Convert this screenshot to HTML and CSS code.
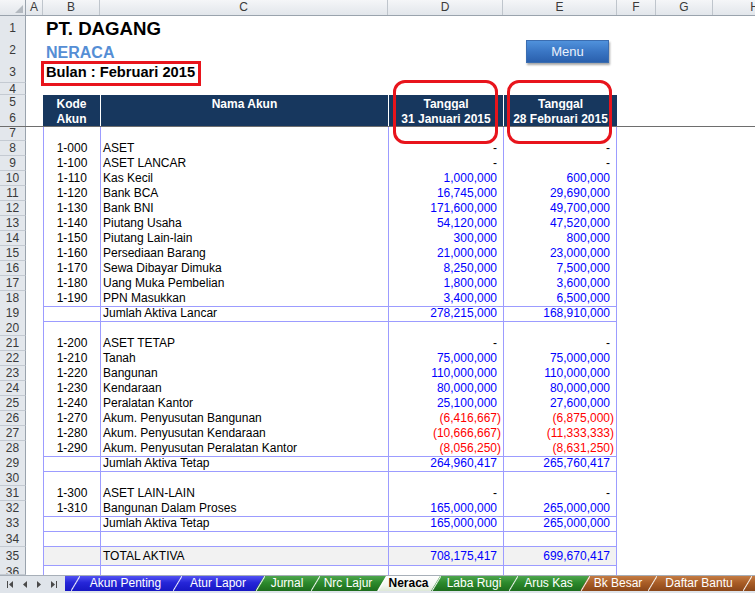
FILE: index.html
```html
<!DOCTYPE html>
<html lang="id">
<head>
    <meta charset="UTF-8">
    <title>Neraca - PT. Dagang</title>
    <link rel="stylesheet" href="styles.css">
</head>
<body>
<div class="sheet">
    <div class="colhead">
        <div class="corner"><svg width="26" height="16" viewBox="0 0 26 16"><polygon points="15,13 23,13 23,5" fill="#b3b9c0"/></svg></div>
        <div>A</div><div>B</div><div>C</div><div>D</div><div>E</div><div>F</div><div>G</div><div>H</div>
    </div>

    <div class="row r1"><div class="rh">1</div><div class="title t1">PT. DAGANG</div></div>
    <div class="row r2"><div class="rh">2</div><div class="title t2">NERACA</div></div>
    <div class="row r3"><div class="rh">3</div><div class="title t3">Bulan : Februari 2015</div></div>
    <div class="row r4"><div class="rh">4</div></div>
    <div class="row"><div class="rh">5</div><div class="h first">Kode</div><div class="h">Nama Akun</div><div class="h">Tanggal</div><div class="h">Tanggal</div></div>
    <div class="row r16"><div class="rh">6</div><div class="h first">Akun</div><div class="h"></div><div class="h">31 Januari 2015</div><div class="h">28 Februari 2015</div></div>

    <div class="row"><div class="rh">7</div><div class="b"></div><div class="c"></div><div class="d"></div><div class="e"></div></div>
    <div class="row"><div class="rh">8</div><div class="b">1-000</div><div class="c">ASET</div><div class="d nil">-</div><div class="e nil">-</div></div>
    <div class="row"><div class="rh">9</div><div class="b">1-100</div><div class="c">ASET LANCAR</div><div class="d nil">-</div><div class="e nil">-</div></div>
    <div class="row"><div class="rh">10</div><div class="b">1-110</div><div class="c">Kas Kecil</div><div class="d">1,000,000</div><div class="e">600,000</div></div>
    <div class="row"><div class="rh">11</div><div class="b">1-120</div><div class="c">Bank BCA</div><div class="d">16,745,000</div><div class="e">29,690,000</div></div>
    <div class="row"><div class="rh">12</div><div class="b">1-130</div><div class="c">Bank BNI</div><div class="d">171,600,000</div><div class="e">49,700,000</div></div>
    <div class="row"><div class="rh">13</div><div class="b">1-140</div><div class="c">Piutang Usaha</div><div class="d">54,120,000</div><div class="e">47,520,000</div></div>
    <div class="row"><div class="rh">14</div><div class="b">1-150</div><div class="c">Piutang Lain-lain</div><div class="d">300,000</div><div class="e">800,000</div></div>
    <div class="row"><div class="rh">15</div><div class="b">1-160</div><div class="c">Persediaan Barang</div><div class="d">21,000,000</div><div class="e">23,000,000</div></div>
    <div class="row"><div class="rh">16</div><div class="b">1-170</div><div class="c">Sewa Dibayar Dimuka</div><div class="d">8,250,000</div><div class="e">7,500,000</div></div>
    <div class="row"><div class="rh">17</div><div class="b">1-180</div><div class="c">Uang Muka Pembelian</div><div class="d">1,800,000</div><div class="e">3,600,000</div></div>
    <div class="row sep"><div class="rh">18</div><div class="b">1-190</div><div class="c">PPN Masukkan</div><div class="d">3,400,000</div><div class="e">6,500,000</div></div>
    <div class="row sep"><div class="rh">19</div><div class="b"></div><div class="c">Jumlah Aktiva Lancar</div><div class="d">278,215,000</div><div class="e">168,910,000</div></div>
    <div class="row"><div class="rh">20</div><div class="b"></div><div class="c"></div><div class="d"></div><div class="e"></div></div>
    <div class="row"><div class="rh">21</div><div class="b">1-200</div><div class="c">ASET TETAP</div><div class="d nil">-</div><div class="e nil">-</div></div>
    <div class="row"><div class="rh">22</div><div class="b">1-210</div><div class="c">Tanah</div><div class="d">75,000,000</div><div class="e">75,000,000</div></div>
    <div class="row"><div class="rh">23</div><div class="b">1-220</div><div class="c">Bangunan</div><div class="d">110,000,000</div><div class="e">110,000,000</div></div>
    <div class="row"><div class="rh">24</div><div class="b">1-230</div><div class="c">Kendaraan</div><div class="d">80,000,000</div><div class="e">80,000,000</div></div>
    <div class="row"><div class="rh">25</div><div class="b">1-240</div><div class="c">Peralatan Kantor</div><div class="d">25,100,000</div><div class="e">27,600,000</div></div>
    <div class="row"><div class="rh">26</div><div class="b">1-270</div><div class="c">Akum. Penyusutan Bangunan</div><div class="d neg">(6,416,667)</div><div class="e neg">(6,875,000)</div></div>
    <div class="row"><div class="rh">27</div><div class="b">1-280</div><div class="c">Akum. Penyusutan Kendaraan</div><div class="d neg">(10,666,667)</div><div class="e neg">(11,333,333)</div></div>
    <div class="row sep"><div class="rh">28</div><div class="b">1-290</div><div class="c">Akum. Penyusutan Peralatan Kantor</div><div class="d neg">(8,056,250)</div><div class="e neg">(8,631,250)</div></div>
    <div class="row sep"><div class="rh">29</div><div class="b"></div><div class="c">Jumlah Aktiva Tetap</div><div class="d">264,960,417</div><div class="e">265,760,417</div></div>
    <div class="row"><div class="rh">30</div><div class="b"></div><div class="c"></div><div class="d"></div><div class="e"></div></div>
    <div class="row"><div class="rh">31</div><div class="b">1-300</div><div class="c">ASET LAIN-LAIN</div><div class="d nil">-</div><div class="e nil">-</div></div>
    <div class="row sep"><div class="rh">32</div><div class="b">1-310</div><div class="c">Bangunan Dalam Proses</div><div class="d">165,000,000</div><div class="e">265,000,000</div></div>
    <div class="row sep"><div class="rh">33</div><div class="b"></div><div class="c">Jumlah Aktiva Tetap</div><div class="d">165,000,000</div><div class="e">265,000,000</div></div>
    <div class="row sep r16"><div class="rh">34</div><div class="b"></div><div class="c"></div><div class="d"></div><div class="e"></div></div>
    <div class="row sep total r18"><div class="rh">35</div><div class="b"></div><div class="c">TOTAL AKTIVA</div><div class="d">708,175,417</div><div class="e">699,670,417</div></div>
    <div class="row r36"><div class="rh">36</div><div class="b"></div><div class="c"></div><div class="d"></div><div class="e"></div></div>

    <div class="tabbar">
        <div class="nav">
            <svg width="65" height="17" viewBox="0 0 65 17">
                <rect x="7" y="5" width="1" height="7" fill="#4a4a4a"/>
                <polygon points="9,8.5 13,5 13,12" fill="#4a4a4a"/>
                <polygon points="23,8.5 27,5 27,12" fill="#4a4a4a"/>
                <polygon points="37,5 37,12 41,8.5" fill="#4a4a4a"/>
                <polygon points="51,5 51,12 55,8.5" fill="#4a4a4a"/>
                <rect x="56" y="5" width="1" height="7" fill="#4a4a4a"/>
            </svg>
        </div>
        <div class="tab blue first w116">Akun Penting</div>
        <div class="tab blue w92">Atur Lapor</div>
        <div class="tab green w64">Jurnal</div>
        <div class="tab green w76">Nrc Lajur</div>
        <div class="tab active w63">Neraca</div>
        <div class="tab green w86">Laba Rugi</div>
        <div class="tab green w81">Arus Kas</div>
        <div class="tab brown w76">Bk Besar</div>
        <div class="tab brown w104">Daftar Bantu</div>
        <div class="tab brown w40"></div>
    </div>

    <!-- shapes drawn over the sheet -->
    <div class="freeze"></div>
    <div class="menu">Menu</div>
    <div class="mark-month"></div>
    <div class="mark-date d1"></div>
    <div class="mark-date d2"></div>
</div>
</body>
</html>
```

FILE: styles.css
```css
* {
    box-sizing: border-box;
}
body {
    margin: 0;
    background: #fff;
    font-family: "Liberation Sans", Arial, sans-serif;
    font-size: 12px;
    color: #000;
}
.sheet {
    position: relative;
    width: 755px;
    height: 593px;
    overflow: hidden;
}

/* column / row headers */
.colhead, .row {
    display: grid;
    grid-template-columns: 26px 17px 57px 288px 115px 114px 39px 57px 84px;
}
.colhead {
    height: 16px;
    background: linear-gradient(#f5f6f8, #e2e6eb);
    border-bottom: 1px solid #9aa3ad;
}
.colhead div {
    border-right: 1px solid #bfc5cc;
    text-align: center;
    line-height: 15px;
    color: #3a3a3a;
}
.colhead .corner {
    position: relative;
    border-right-color: #9aa3ad;
}
.corner svg {
    position: absolute;
    left: 0;
    top: 0;
}
.row {
    height: 15px;
    line-height: 15px;
}
.row.r1 { height: 24px; line-height: 24px; }
.row.r2 { height: 21px; line-height: 21px; }
.row.r3 { height: 22px; line-height: 22px; }
.row.r4 { height: 12px; line-height: 12px; }
.row.r16 { height: 16px; line-height: 16px; }
.row.r18 { height: 18px; line-height: 18px; }
.row.r36 { height: 10px; line-height: 15px; }
.rh {
    grid-column: 1;
    background: #e3e7ec;
    border-right: 1px solid #9aa3ad;
    border-bottom: 1px solid #c4cad2;
    text-align: center;
    color: #3a3a3a;
    overflow: hidden;
}

/* titles */
.title {
    grid-column: 3 / -1;
    padding-left: 3px;
    font-weight: bold;
    white-space: nowrap;
}
.t1 {
    font-size: 18.67px;
    padding-top: 1px;
}
.t2 {
    font-size: 16px;
    color: #558ed5;
    padding-top: 2px;
}
.t3 {
    font-size: 14.67px;
}

/* table header */
.h {
    background: #17375e;
    color: #fff;
    font-weight: bold;
    text-align: center;
    line-height: 15px;
    padding-top: 2px;
    border-left: 1px solid #fff;
    white-space: nowrap;
}
.h.first {
    grid-column: 3;
    border-left: 0;
}

/* table body */
.b, .c, .d, .e {
    border-left: 1px solid #9c9cff;
    white-space: nowrap;
}
.b {
    grid-column: 3;
    text-align: center;
}
.c {
    padding-left: 2px;
}
.d, .e {
    text-align: right;
    padding-right: 6px;
    color: #0000ff;
}
.e {
    border-right: 1px solid #9c9cff;
}
.d.nil, .e.nil {
    color: #000;
}
.d.neg, .e.neg {
    color: #ff0000;
    padding-right: 2px;
}
.sep .b, .sep .c, .sep .d, .sep .e {
    border-bottom: 1px solid #9c9cff;
}
.total .b, .total .c, .total .d, .total .e {
    background: #f2f2f2;
}

/* sheet tabs */
.tabbar {
    display: flex;
    height: 18px;
    background: #dfe4ea;
    border-top: 1px solid #a7afb8;
}
.nav {
    flex: none;
    width: 65px;
}
.nav svg {
    display: block;
}
.tab {
    flex: none;
    height: 15px;
    margin-left: -9px;
    padding: 0 9px;
    line-height: 15px;
    color: #fff;
    text-align: center;
    white-space: nowrap;
    overflow: hidden;
    clip-path: polygon(0 100%, 9px 0, 100% 0, 100% 100%);
    background:
        linear-gradient(to bottom right, transparent 43%, rgba(255, 255, 255, 0.9) 50%, transparent 57%) 1px 0 / 9px 15px no-repeat,
        var(--fill);
}
.tab.first {
    margin-left: 0;
    padding-left: 14px;
    clip-path: none;
    background-position: 6px 0, 0 0;
}
.blue { --fill: linear-gradient(#5252f3, #2525d8 45%, #1717c3); }
.green { --fill: linear-gradient(#4ea64e, #2c8a2c 45%, #1d6d1d); }
.brown { --fill: linear-gradient(#c47c44, #a95d26 45%, #8a4619); }
.active {
    --fill: linear-gradient(#ffffff, #f4f6f2 60%, #dde8d6);
    color: #000;
    font-weight: bold;
}
.w116 { width: 116px; }
.w92 { width: 92px; }
.w64 { width: 64px; }
.w76 { width: 76px; }
.w63 { width: 63px; }
.w86 { width: 86px; }
.w81 { width: 81px; }
.w104 { width: 104px; }
.w40 { width: 40px; }

/* objects over the sheet */
.freeze {
    position: absolute;
    left: 0;
    right: 0;
    top: 126px;
    height: 1px;
    background: #6e6e6e;
}
.menu {
    position: absolute;
    left: 526px;
    top: 40px;
    width: 83px;
    height: 23px;
    background: linear-gradient(#5092dc, #3a76c4 50%, #2a60ad);
    border: 1px solid #3b6db0;
    box-shadow: 1px 2px 2px rgba(0, 0, 0, 0.35);
    color: #eaf1fb;
    font-size: 13px;
    line-height: 21px;
    text-align: center;
}
.mark-month {
    position: absolute;
    left: 41px;
    top: 61px;
    width: 160px;
    height: 25px;
    border: 3px solid #e8141c;
}
.mark-date {
    position: absolute;
    top: 80px;
    width: 105px;
    height: 64px;
    border: 3px solid #e8141c;
    border-radius: 12px;
}
.mark-date.d1 { left: 393px; }
.mark-date.d2 { left: 507px; }
```
